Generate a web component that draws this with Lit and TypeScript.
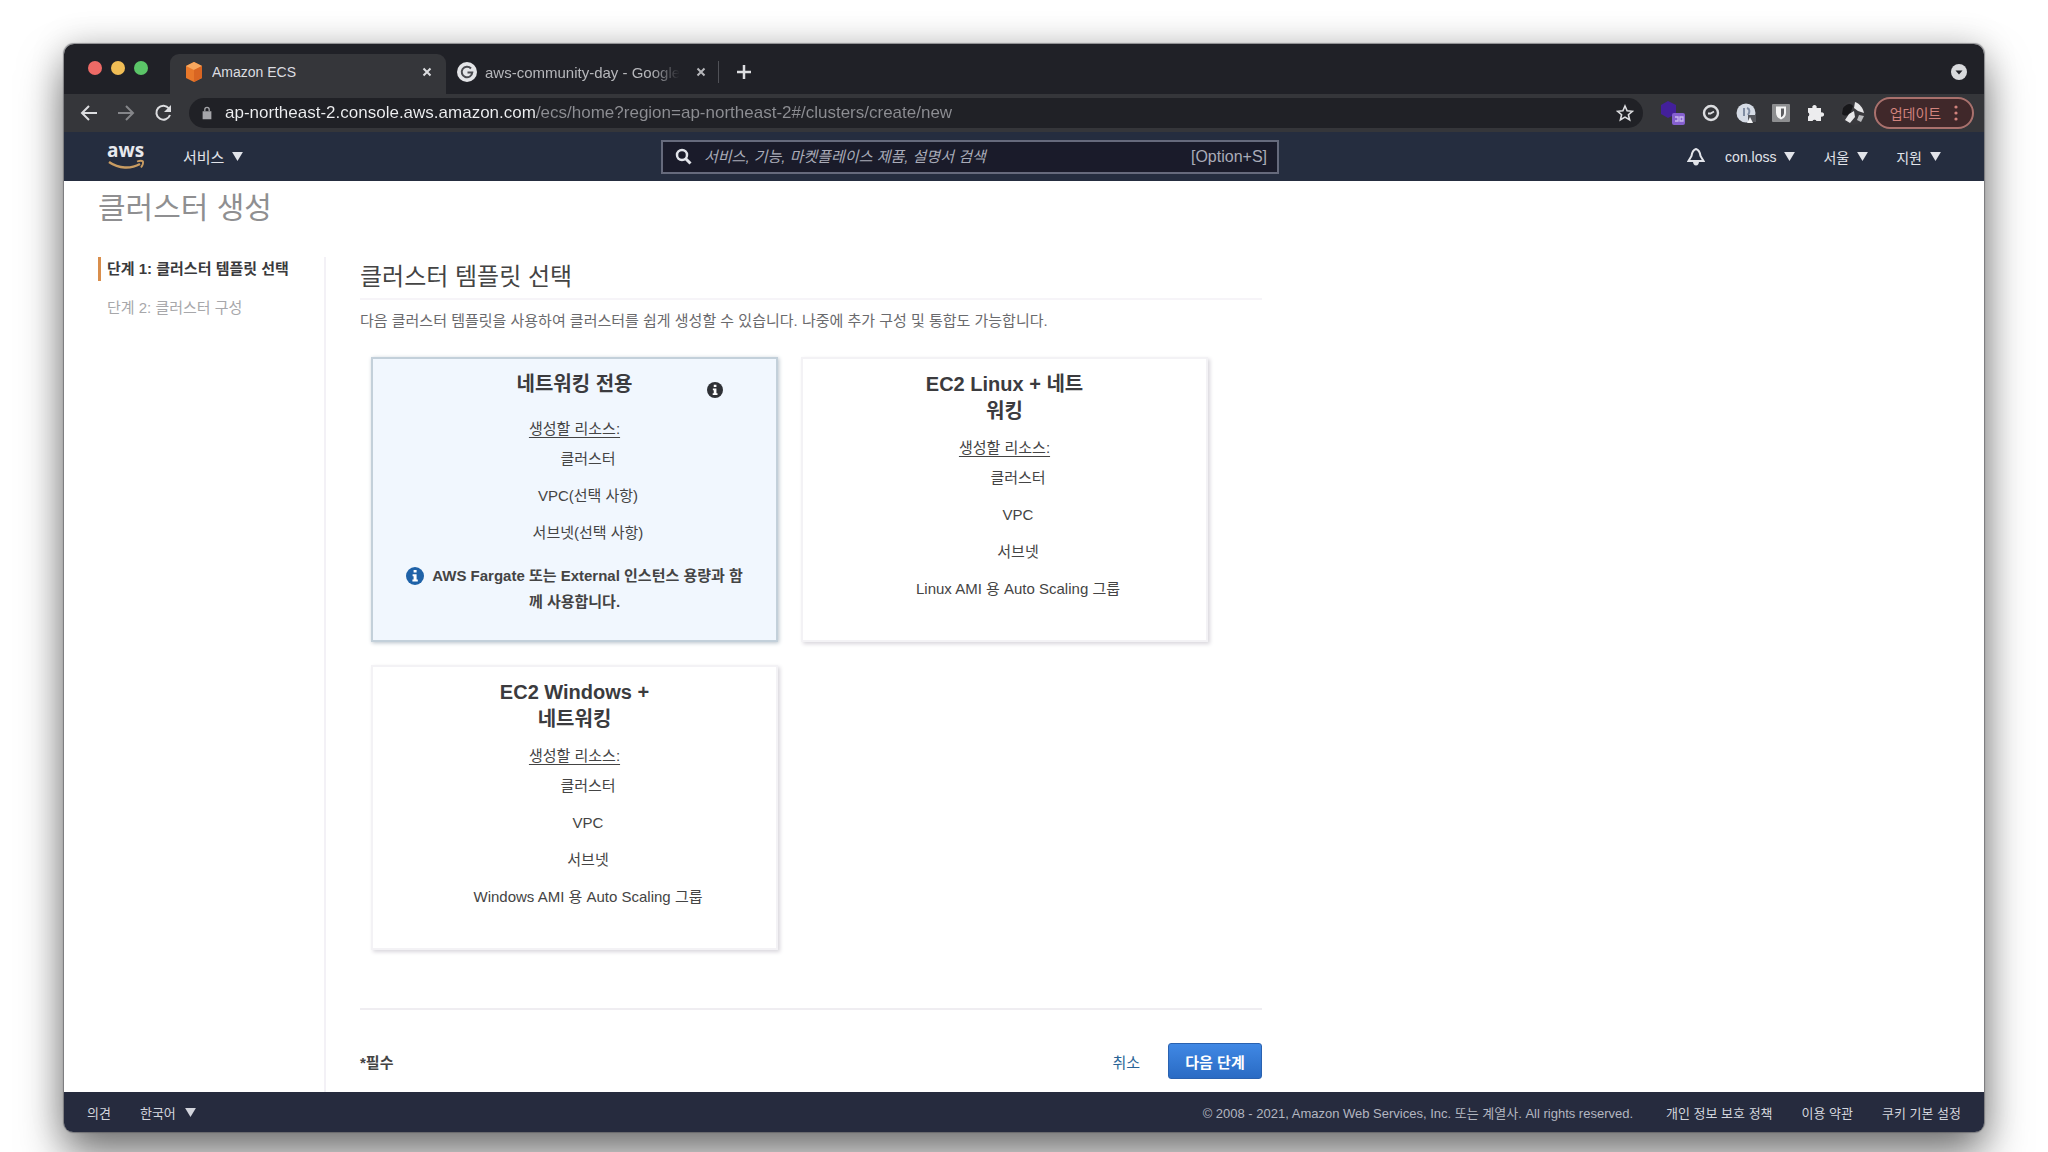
import { LitElement, html, css, svg } from "lit";
import { customElement, property, state } from "lit/decorators.js";
import { classMap } from "lit/directives/class-map.js";

const fontStack = css`"Liberation Sans", "Noto Sans CJK KR", sans-serif`;

const closeIcon = html`<svg viewBox="0 0 10 10" width="10" height="10" aria-hidden="true">
  <path d="M1.5 1.5l7 7M8.5 1.5l-7 7" stroke="currentColor" stroke-width="2" fill="none" /></svg>`;

const infoGlyph = (size: number) => html`<svg viewBox="0 0 18 18" width=${size} height=${size} aria-hidden="true">
  <circle cx="9" cy="9" r="9" fill="currentColor" />
  <path d="M7.600 3h3v2.600h-3zM6.600 7.200h4v5.400h1.200v2H6.400v-2h1.200V9.200h-1z" fill="#fff" /></svg>`;

@customElement("browser-chrome")
class BrowserChrome extends LitElement {
  static styles = css`
    :host { display: block; font-family: ${fontStack}; color: #dcdde0; }
    button { font: inherit; color: inherit; background: none; border: 0; padding: 0; display: flex; align-items: center; justify-content: center; }
    svg { display: block; flex: none; }
    .tabs { display: flex; align-items: flex-end; height: 50px; background: #202127; padding-right: 17px; }
    .lights { display: flex; gap: 9px; padding: 0 22px 19px 24px; }
    .light { width: 14px; height: 14px; border-radius: 50%; }
    .red { background: #ee6a66; }
    .yellow { background: #f0bd55; }
    .green { background: #5bc568; }
    .tab { box-sizing: border-box; display: flex; align-items: center; gap: 8px; height: 40px; font-size: 14px; padding: 0 14px 4px; min-width: 0; }
    .tab.active { width: 276px; background: #35363a; border-radius: 9px 9px 0 0; }
    .tab.other { width: 272px; padding-left: 11px; padding-right: 12px; font-size: 15px; color: #b6b7bb; }
    .name { flex: 1; overflow: hidden; white-space: nowrap; }
    .fade { -webkit-mask-image: linear-gradient(90deg, #000 82%, transparent 96%); mask-image: linear-gradient(90deg, #000 82%, transparent 96%); }
    .rule { width: 1px; height: 22px; background: #505157; margin-bottom: 11px; }
    .plus { margin: 0 auto 15px 18px; }
    .menu { margin-bottom: 14px; }
    .toolbar { display: flex; align-items: center; height: 38px; background: #35363a; padding: 0 10px 0 16px; }
    .moves { display: flex; gap: 19px; padding-right: 17px; }
    .dim { color: #85868a; }
    .address { flex: 1; display: flex; align-items: center; gap: 12px; height: 30px; border-radius: 15px; background: #202126; padding: 0 9px 0 12px; }
    .url { flex: 1; min-width: 0; border: 0; outline: 0; padding: 0; font: 17px ${fontStack}; color: #e6e7ea;
      background: linear-gradient(90deg, #eff0f2 312px, #8d8e93 312px); -webkit-background-clip: text; background-clip: text; -webkit-text-fill-color: transparent; }
    .extensions { display: flex; align-items: center; gap: 16px; padding: 0 8px 0 17px; }
    .update { box-sizing: border-box; width: 100px; height: 32px; gap: 13px; border: 2px solid #a9716d; border-radius: 16px; background: #40282a; color: #d2837d; font-size: 14px; white-space: nowrap; }
  `;

  render() {
    return html`
      <div class="tabs">
        <div class="lights"><span class="light red"></span><span class="light yellow"></span><span class="light green"></span></div>
        <div class="tab active">
          <svg viewBox="0 0 20 20" width="20" height="20" aria-hidden="true">
            <path d="M10 0l8 4v12l-8 4-8-4V4z" fill="#e8782a" /><path d="M10 0l8 4-8 4-8-4z" fill="#f7a75e" /><path d="M10 8l8-4v12l-8 4z" fill="#d96522" />
          </svg>
          <span class="name">Amazon ECS</span>
          <button aria-label="탭 닫기">${closeIcon}</button>
        </div>
        <div class="tab other">
          <svg viewBox="0 0 20 20" width="20" height="20" aria-hidden="true">
            <circle cx="10" cy="10" r="10" fill="#e4e5e8" />
            <path d="M14 6.500A5.300 5.300 0 1 0 15.300 10.500H10.500" fill="none" stroke="#4a4b50" stroke-width="2" />
          </svg>
          <span class="name fade">aws-community-day - Google</span>
          <button aria-label="탭 닫기">${closeIcon}</button>
        </div>
        <span class="rule"></span>
        <button class="plus" aria-label="새 탭">
          <svg viewBox="0 0 14 14" width="14" height="14"><path d="M7 0v14M0 7h14" stroke="currentColor" stroke-width="2.500" /></svg>
        </button>
        <button class="menu" aria-label="탭 검색">
          <svg viewBox="0 0 16 16" width="16" height="16"><circle cx="8" cy="8" r="8" fill="#d9dadd" /><path d="M4.500 6.500h7L8 10.500z" fill="#202127" /></svg>
        </button>
      </div>
      <div class="toolbar">
        <div class="moves">
          <button aria-label="뒤로"><svg viewBox="0 0 18 18" width="18" height="18"><path d="M17 9H2.500M9 2L2 9l7 7" fill="none" stroke="currentColor" stroke-width="2" /></svg></button>
          <button class="dim" aria-label="앞으로"><svg viewBox="0 0 18 18" width="18" height="18"><path d="M1 9h14.500M9 2l7 7-7 7" fill="none" stroke="currentColor" stroke-width="2" /></svg></button>
          <button aria-label="새로고침"><svg viewBox="0 0 18 18" width="18" height="18"><path d="M15 4.500A7 7 0 1 0 16 11" fill="none" stroke="currentColor" stroke-width="2" /><path d="M17 1v7h-7z" fill="currentColor" /></svg></button>
        </div>
        <div class="address">
          <svg viewBox="0 0 12 16" width="12" height="14" aria-hidden="true"><path d="M1 6h10v9H1z" fill="#a5a6aa" /><path d="M3.500 6V4a2.500 2.500 0 0 1 5 0v2" fill="none" stroke="#a5a6aa" stroke-width="1.500" /></svg>
          <input class="url" aria-label="주소" value="ap-northeast-2.console.aws.amazon.com/ecs/home?region=ap-northeast-2#/clusters/create/new" />
          <button aria-label="북마크"><svg viewBox="0 0 18 18" width="18" height="18"><path d="M9 2l2.100 4.800 5.200.5-3.900 3.400 1.200 5.100L9 13.100l-4.600 2.700 1.200-5.100L1.700 7.300l5.200-.5z" fill="none" stroke="currentColor" stroke-width="1.600" /></svg></button>
        </div>
        <div class="extensions">
          <svg viewBox="0 0 26 26" width="26" height="26" aria-hidden="true"><path d="M8 1l8 4v9l-8 4-7-4V5z" fill="#43209a" /><rect x="12" y="13" width="13" height="12" rx="2" fill="#8560cf" /><path d="M15 17h3v4h-3M20 17h3v4h-3z" fill="none" stroke="#c9b8ee" stroke-width="1.300" /></svg>
          <svg viewBox="0 0 18 18" width="18" height="18" aria-hidden="true"><circle cx="9" cy="9" r="7" fill="none" stroke="#dcdde0" stroke-width="2.400" /><path d="M6 9.500h2.500L12 7.500" fill="none" stroke="#dcdde0" stroke-width="1.800" /></svg>
          <svg viewBox="0 0 20 20" width="20" height="20" aria-hidden="true"><circle cx="10" cy="10" r="9.500" fill="#d5dbe5" /><path d="M8 5v8M11 5c3 1 3 4 1 7" fill="none" stroke="#7f8ca2" stroke-width="2" /><rect x="12" y="12" width="8" height="7" fill="#55575d" /><path d="M11 20l3-6 3 6z" fill="#f2f3f5" /></svg>
          <svg viewBox="0 0 18 18" width="18" height="18" aria-hidden="true"><rect width="18" height="18" rx="1" fill="#8d8e90" /><path d="M4 2.500h10v6c0 4-2.500 6-5 7-2.500-1-5-3-5-7z" fill="#f4f4f4" /><path d="M9 4.500h3v4.500c0 2-1.300 3.300-3 4.300z" fill="#5c5d60" /></svg>
          <svg viewBox="0 0 18 18" width="18" height="18" aria-hidden="true"><path d="M2 4h4.500a2.200 2.200 0 1 1 4 0H15v4.500a2.200 2.200 0 1 1 0 4V17h-4.500a2.200 2.200 0 0 0-4 0H2v-4.500a2.200 2.200 0 0 0 0-4z" fill="#ececee" /></svg>
          <svg viewBox="0 0 26 26" width="26" height="26" aria-hidden="true"><circle cx="13" cy="13" r="12" fill="#39393d" /><path d="M3 8c4-5 8-5 10-2l-3 8c-3 2-6 2-8 0z" fill="#17171a" /><path d="M15 2c5 2 8 6 9 11l-6-2-4-3zM9 14l5-3 1 6-5 6-5-3z" fill="#e6e6e8" /><path d="M19 15l5 1-3 6-4-2z" fill="#b9babd" /></svg>
        </div>
        <button class="update">업데이트
          <svg viewBox="0 0 4 16" width="4" height="16"><circle cx="2" cy="2" r="1.600" fill="currentColor" /><circle cx="2" cy="8" r="1.600" fill="currentColor" /><circle cx="2" cy="14" r="1.600" fill="currentColor" /></svg>
        </button>
      </div>
    `;
  }
}

@customElement("console-nav")
class ConsoleNav extends LitElement {
  static styles = css`
    :host { display: grid; grid-template-columns: 597fr 618fr 705fr; align-items: center; height: 49px; background: #252d3f; font-family: ${fontStack}; color: #e2e4ea; }
    svg { display: block; flex: none; }
    button { font: inherit; color: inherit; background: none; border: 0; padding: 0; display: flex; align-items: center; gap: 8px; white-space: nowrap; }
    .start { display: flex; align-items: center; gap: 37px; padding-left: 42px; font-size: 15px; }
    .end { display: flex; align-items: center; justify-content: flex-end; gap: 28px; padding-right: 43px; font-size: 14px; }
    .alerts { margin-right: -8px; }
    .search { box-sizing: border-box; display: flex; align-items: center; gap: 12px; height: 34px; border: 2px solid #666a7c; background: #1a1b2a; padding: 0 10px 0 12px; }
    .query { flex: 1; min-width: 0; border: 0; outline: 0; padding: 0; background: none; font: italic 15px ${fontStack}; color: #fff; }
    .query::placeholder { color: #a9abb8; opacity: 1; }
    .hint { font-size: 16px; color: #a9abb8; }
    .logo { overflow: visible; }
    .brand { font: bold 19px "Open Sans", sans-serif; }
  `;

  private arrow = html`<svg viewBox="0 0 12 10" width="11" height="9" aria-hidden="true"><path d="M0 0h12L6 10z" fill="currentColor" /></svg>`;

  render() {
    return html`
      <div class="start">
        <a href="#home" aria-label="AWS">
          <svg class="logo" viewBox="0 -5 40 40" width="40" height="40">
            <text class="brand" x="1" y="15" fill="#e8e9ee">aws</text>
            <path d="M3 20c10 7 22 7 31 2" fill="none" stroke="#c99c62" stroke-width="2.400" />
            <path d="M31 19.500c3-1 5-1 6 0 .5 2-.5 4-2 6" fill="none" stroke="#c99c62" stroke-width="1.800" />
          </svg>
        </a>
        <button>서비스 ${this.arrow}</button>
      </div>
      <form class="search" role="search">
        <svg viewBox="0 0 17 17" width="17" height="17" aria-hidden="true"><circle cx="7" cy="7" r="5" fill="none" stroke="#e2e4ea" stroke-width="2.500" /><path d="M10.500 10.500l5 5" stroke="#e2e4ea" stroke-width="3" /></svg>
        <input class="query" type="search" aria-label="검색" placeholder="서비스, 기능, 마켓플레이스 제품, 설명서 검색" />
        <span class="hint">[Option+S]</span>
      </form>
      <div class="end">
        <button class="alerts" aria-label="알림">
          <svg viewBox="0 0 18 18" width="18" height="18"><path d="M9 1c-3.500 1-4 3.500-4.500 7L1.500 13h15l-3-5C13 4.500 12.500 2 9 1z" fill="none" stroke="currentColor" stroke-width="2" /><path d="M6 13.500h6c0 2-1 4-3 4s-3-2-3-4z" fill="currentColor" /></svg>
        </button>
        <button>con.loss ${this.arrow}</button>
        <button>서울 ${this.arrow}</button>
        <button>지원 ${this.arrow}</button>
      </div>
    `;
  }
}

interface Template {
  id: string;
  name: string;
  resources: string[];
  note?: string;
}

const templates: Template[] = [
  {
    id: "network",
    name: "네트워킹 전용",
    resources: ["클러스터", "VPC(선택 사항)", "서브넷(선택 사항)"],
    note: "AWS Fargate 또는 External 인스턴스 용량과 함께 사용합니다.",
  },
  { id: "linux", name: "EC2 Linux + 네트워킹", resources: ["클러스터", "VPC", "서브넷", "Linux AMI 용 Auto Scaling 그룹"] },
  { id: "windows", name: "EC2 Windows + 네트워킹", resources: ["클러스터", "VPC", "서브넷", "Windows AMI 용 Auto Scaling 그룹"] },
];

@customElement("template-card")
class TemplateCard extends LitElement {
  static styles = css`
    :host { display: block; font: 15px ${fontStack}; color: #444; }
    .card { box-sizing: border-box; height: 100%; min-height: 285px; padding: 12px 22px; border: 2px solid #f3f2f5; background: #fff; box-shadow: 2px 2px 4px #d8d6dc; text-align: center; }
    .card.chosen { border-color: #c3d0da; background: #f1f7fe; box-shadow: 1px 1px 4px #b9c3cb; }
    .head { display: grid; grid-template-columns: 1fr 168px 1fr; }
    .chosen .head { min-height: 35px; }
    .title { grid-column: 2; font-size: 20px; font-weight: bold; line-height: 27px; color: #3b3b3e; }
    .pick { appearance: none; width: 0; height: 0; margin: 0; display: block; }
    .info { justify-self: start; margin: 11px 0 0 48px; padding: 0; border: 0; background: none; color: #2f3136; height: 16px; }
    .caption { margin: 12px 0 8px; line-height: 22px; text-decoration: underline; text-underline-offset: 3px; }
    .list { list-style: none; margin: 0; padding: 0 0 0 27px; display: grid; gap: 16px; line-height: 21px; }
    .note { margin: 20px 0 0; padding: 0 8px; font-weight: bold; line-height: 26px; }
    .badge { color: #1f62a8; margin-right: 8px; }
    .badge svg { vertical-align: -4px; }
  `;

  @property({ attribute: false }) template!: Template;
  @property({ type: Boolean }) chosen = false;

  private pick() {
    this.dispatchEvent(new CustomEvent("pick", { detail: this.template.id }));
  }

  render() {
    const t = this.template;
    return html`
      <div class=${classMap({ card: true, chosen: this.chosen })} @click=${this.pick}>
        <div class="head">
          <label class="title"><input class="pick" type="radio" name="template" .checked=${this.chosen} />${t.name}</label>
          ${this.chosen ? html`<button class="info" aria-label="정보">${infoGlyph(16)}</button>` : null}
        </div>
        <p class="caption">생성할 리소스:</p>
        <ul class="list">${t.resources.map((r) => html`<li>${r}</li>`)}</ul>
        ${t.note ? html`<p class="note"><span class="badge">${infoGlyph(18)}</span>${t.note}</p>` : null}
      </div>
    `;
  }
}

@customElement("app-root")
class AppRoot extends LitElement {
  static styles = css`
    :host { box-sizing: border-box; display: flex; min-height: 100vh; padding: 44px 64px 20px; overflow: hidden; background: #fff; font: 15px ${fontStack}; }
    .window { flex: 1; min-width: 0; display: flex; flex-direction: column; border-radius: 10px; background: #fff; box-shadow: 0 0 1px 1px #55565c99, 0 24px 44px #00000080, 0 0 34px #0000002e; }
    .top { border-radius: 10px 10px 0 0; overflow: hidden; }
    .page { flex: 1; display: flex; flex-direction: column; padding-left: 34px; color: #444; }
    .heading { margin: 5px 0 27px; font-size: 30px; line-height: 44px; font-weight: normal; color: #8f8f91; }
    .columns { flex: 1; display: grid; grid-template-columns: 228px minmax(0, 902px); }
    .steps { list-style: none; margin: 0; padding: 0; border-right: 2px solid #f3f1f6; display: flex; flex-direction: column; gap: 15px; line-height: 24px; }
    .step { border-left: 3px solid transparent; padding-left: 6px; }
    .step a { color: #a7a7aa; text-decoration: none; }
    .step.current { border-color: #d98e4c; }
    .step.current a { color: #3a3a3d; font-weight: bold; }
    .main { padding-left: 34px; width: 902px; max-width: 100%; }
    .subheading { margin: 0 0 9px; padding: 2px 0 3px; border-bottom: 2px solid #f6f4f8; font-size: 24px; line-height: 36px; font-weight: normal; color: #444; }
    .lead { margin: 0; line-height: 24px; color: #6a6a6d; }
    .cards { display: grid; grid-template-columns: 407px 407px; gap: 23px; padding: 24px 0 58px 11px; }
    .actions { border-top: 2px solid #efedf1; padding: 33px 0 12px; display: flex; align-items: center; gap: 28px; }
    .required { margin: 0 auto 0 0; font-weight: bold; }
    .cancel { font: 15px ${fontStack}; color: #2a6496; border: 0; background: none; padding: 0; }
    .next { box-sizing: border-box; width: 94px; height: 36px; border: 1px solid #2a62b0; border-radius: 3px; padding: 0; background: linear-gradient(#4088e4, #2a6bc4); color: #fff; font: bold 15px ${fontStack}; }
    .footer { display: flex; align-items: center; gap: 29px; height: 40px; padding: 0 23px; border-radius: 0 0 9px 9px; background: #262b3e; color: #d3d5dd; font-size: 13px; white-space: nowrap; }
    .footer a { color: inherit; text-decoration: none; }
    .language { display: flex; align-items: center; gap: 9px; margin-right: auto; border: 0; padding: 0; background: none; color: inherit; font: 13px ${fontStack}; }
    .legal { color: #b3b6c0; margin-right: 4px; }
  `;

  @state() private selected = "network";

  render() {
    return html`
      <div class="window">
        <div class="top">
          <browser-chrome></browser-chrome>
          <console-nav></console-nav>
        </div>
        <div class="page">
          <h1 class="heading">클러스터 생성</h1>
          <div class="columns">
            <ol class="steps">
              <li class="step current"><a href="#step1">단계 1: 클러스터 템플릿 선택</a></li>
              <li class="step"><a href="#step2">단계 2: 클러스터 구성</a></li>
            </ol>
            <main class="main">
              <h2 class="subheading">클러스터 템플릿 선택</h2>
              <p class="lead">다음 클러스터 템플릿을 사용하여 클러스터를 쉽게 생성할 수 있습니다. 나중에 추가 구성 및 통합도 가능합니다.</p>
              <div class="cards">
                ${templates.map(
                  (t) => html`<template-card
                    .template=${t}
                    .chosen=${t.id === this.selected}
                    @pick=${(e: CustomEvent<string>) => (this.selected = e.detail)}
                  ></template-card>`
                )}
              </div>
              <div class="actions">
                <p class="required">*필수</p>
                <button class="cancel">취소</button>
                <button class="next">다음 단계</button>
              </div>
            </main>
          </div>
        </div>
        <footer class="footer">
          <a href="#feedback">의견</a>
          <button class="language">한국어
            <svg viewBox="0 0 12 10" width="11" height="9" aria-hidden="true">${svg`<path d="M0 0h12L6 10z" fill="currentColor" />`}</svg>
          </button>
          <span class="legal">© 2008 - 2021, Amazon Web Services, Inc. 또는 계열사. All rights reserved.</span>
          <a href="#privacy">개인 정보 보호 정책</a>
          <a href="#terms">이용 약관</a>
          <a href="#cookies">쿠키 기본 설정</a>
        </footer>
      </div>
    `;
  }
}
